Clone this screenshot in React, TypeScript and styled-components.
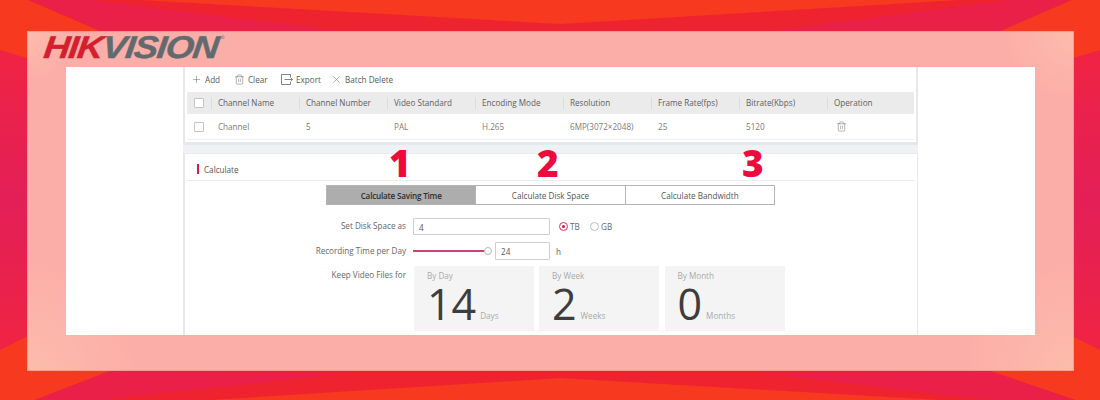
import React from "react";
import styled, { createGlobalStyle } from "styled-components";
import { Plus, Trash2, X } from "lucide-react";

const Global = createGlobalStyle`
  html, body { margin: 0; padding: 0; background: #f5371f; }
  * { box-sizing: border-box; }
`;
const Stage = styled.div`
  position: relative; width: 1100px; height: 400px; overflow: hidden;
  padding: 31px 26px 29px 27px; display: flex;
  font-family: "Open Sans", sans-serif; font-size: 8.15px; color: #555;
`;
const Backdrop = styled.svg`position: absolute; inset: 0; width: 1100px; height: 400px; filter: blur(0.5px);`;
const Frame = styled.div`
  position: relative; flex: 1; padding: 36px 39px; display: flex;
  box-shadow: inset 0 0 0 1px rgba(240, 120, 100, 0.4);
  background:
    radial-gradient(circle at 0 100%, #fdbcab 0, rgba(253, 188, 171, 0) 110px),
    radial-gradient(circle at 100% 100%, #fdbcab 0, rgba(253, 188, 171, 0) 110px),
    radial-gradient(circle at 100% 0, #fdbcab 0, rgba(253, 188, 171, 0) 70px),
    radial-gradient(circle at 0 0, #fdbcab 0, rgba(253, 188, 171, 0) 50px),
    #fbaea8;
`;
const Logo = styled.div`
  position: absolute; left: 17px; top: 0px; font: italic 700 31.5px/32px "Liberation Sans", sans-serif;
  letter-spacing: -1.1px; color: #626a6e; transform: scaleX(1.15) skewX(-6deg); transform-origin: left;
  -webkit-text-stroke: 0.4px currentColor; white-space: nowrap;
  sup { font-size: 5px; font-style: normal; vertical-align: 19px; line-height: 0; font-weight: 400; letter-spacing: 0; margin-left: 1px; -webkit-text-stroke: 0; }
`;
const LogoRed = styled.span`color: #d3202f;`;
const Page = styled.div`
  flex: 1; background: #fff; padding: 0 117px; display: flex; overflow: hidden;
`;
const Column = styled.div`
  flex: 1; display: flex; flex-direction: column; background: #eff2f4; gap: 8px; position: relative;
`;
const Card = styled.section`
  background: #fff; border: solid #e6e8ea; border-width: 0 2px 0 2px; padding: 0 2px;
`;
const TopCard = styled(Card)`height: 78px; border-bottom: 3px solid #e4e8eb; flex: none;`;
const BottomCard = styled(Card)`flex: 1; min-height: 0; border-top: 1px solid #e8eaec; border-right-width: 1px; padding-right: 3px;`;
const Toolbar = styled.div`height: 24px; margin-bottom: 1px; display: flex; align-items: center; padding-left: 4px;`;
const ToolItem = styled.span<{ $w: number }>`
  display: inline-flex; align-items: center; gap: 3px; width: ${p => p.$w}px; color: #5a5a5a; white-space: nowrap;
  svg { flex: none; }
`;
const Cols = styled.div`display: grid; grid-template-columns: 24px repeat(7, 88px) 87px;`;
const HeadRow = styled(Cols)`height: 22px; background: #ebebeb; align-items: center; color: #5e5e5e;`;
const BodyRow = styled(Cols)`height: 26px; background: #fff; align-items: center; color: #7b7b7b; border-bottom: 1px solid #f0f0f0;`;
const Cell = styled.div<{ $sep?: boolean }>`
  padding-left: 6px; white-space: nowrap; height: 12px; line-height: 12px;
  border-left: 1px solid ${p => (p.$sep ? "#dcdcdc" : "transparent")};
`;
const CheckCell = styled.div`padding-left: 7px; display: flex; align-items: center;`;
const Check = styled.span`
  width: 10px; height: 10px; border: 1px solid #c4c4c4; border-radius: 1px; background: #fff;
`;
const OpIcon = styled.div`padding-left: 9px; color: #666; display: flex; align-items: center;`;
const TitleBar = styled.div`
  height: 27px; border-bottom: 1px solid #ececec; display: flex; align-items: center; padding: 4px 0 0 10px; gap: 5px; color: #555;
`;
const RedMark = styled.i`width: 2px; height: 10px; background: #e2174a; display: block;`;
const Tabs = styled.div`display: flex; margin: 4px 0 0 139px; width: 449px; height: 20px; border: 1px solid #b5b5b5;`;
const Tab = styled.div<{ $active?: boolean }>`
  flex: 1; display: flex; align-items: center; justify-content: center;
  background: ${p => (p.$active ? "#adadad" : "#fff")};
  color: ${p => (p.$active ? "#2e2e2e" : "#555")};
  font-weight: ${p => (p.$active ? 600 : 400)};
  letter-spacing: ${p => (p.$active ? "-0.2px" : "0")};
  & + & { border-left: 1px solid #b5b5b5; }
`;
const Form = styled.div`
  display: grid; grid-template-columns: 219px 1fr; column-gap: 7px; margin-top: 12px; align-items: start;
`;
const Label = styled.div`
  text-align: right; color: #666; line-height: 18px; white-space: nowrap;
`;
const FieldRow = styled.div<{ $gap: number }>`display: flex; align-items: center; height: 18px; color: #666; margin-bottom: ${p => p.$gap}px;`;
const Input = styled.div<{ $w: number; $h: number }>`
  width: ${p => p.$w}px; height: ${p => p.$h}px; border: 1px solid #cfcfcf; border-radius: 1px;
  padding-left: 5px; line-height: 17px; color: #555; background: #fff; flex: none;
`;
const Radio = styled.span<{ $on?: boolean }>`
  width: 9px; height: 9px; border-radius: 50%; border: 1px solid ${p => (p.$on ? "#d4345f" : "#bbb")};
  display: inline-flex; align-items: center; justify-content: center; margin-right: 2px;
  &::after { content: ""; width: 3px; height: 3px; border-radius: 50%; background: ${p => (p.$on ? "#d9154a" : "transparent")}; }
`;
const FirstRadio = styled(Radio)`margin-left: 9px;`;
const RadioText = styled.span<{ $w: number }>`width: ${p => p.$w}px; color: #666;`;
const Unit = styled.span`margin-left: 6px; color: #666;`;
const Track = styled.div`width: 71px; height: 1.5px; background: #c9456f;`;
const Knob = styled.span`
  width: 8px; height: 8px; border: 1px solid #b8b8b8; border-radius: 50%; background: #fff; margin-right: 3px;
`;
const Stats = styled.div`display: flex; gap: 5.5px; margin-left: 1px;`;
const Stat = styled.div<{ $w: number }>`
  width: ${p => p.$w}px; height: 65px; background: #f4f4f5; padding: 4px 0 0 13px; color: #a9a9a9; flex: none;
`;
const StatLabel = styled.div`line-height: 11px;`;
const StatValue = styled.div`display: flex; align-items: flex-end; gap: 4px; height: 34px; margin-top: 6px;`;
const StatNum = styled.span`font-size: 43px; line-height: 33px; color: #3d3d3d; font-weight: 400; margin-bottom: 1px;`;
const StatUnit = styled.span`line-height: 11px;`;
const Callout = styled.div<{ $x: number }>`
  position: absolute; left: ${p => p.$x}px; top: 77px; font: 800 37px/37px "Open Sans", sans-serif; color: #ef0a3d;
`;

const Trash = () => <Trash2 size={11} strokeWidth={1} />;
const ExportIcon = () => (
  <svg width="12" height="11" viewBox="0 0 12 11" fill="none" stroke="#777" strokeWidth="0.9">
    <path d="M9.5 3V.5H.5v10h9V8M3.5 5.5h8M9.5 3.5l2 2-2 2" />
  </svg>
);

const heads = ["Channel Name", "Channel Number", "Video Standard", "Encoding Mode", "Resolution", "Frame Rate(fps)", "Bitrate(Kbps)", "Operation"];
const vals = ["Channel", "5", "PAL", "H.265", "6MP(3072×2048)", "25", "5120"];

export default function App() {
  return (
    <Stage>
      <Global />
      <Backdrop viewBox="0 0 1100 400" preserveAspectRatio="none">
        <defs>
          <linearGradient id="side" x1="0" x2="0" y1="0" y2="1">
            <stop offset="0" stopColor="#ef2343" />
            <stop offset="0.5" stopColor="#e31f57" />
            <stop offset="1" stopColor="#ef2343" />
          </linearGradient>
        </defs>
        <rect width="1100" height="400" fill="#f6391f" />
        <path d="M0 50 L40 62 L40 330 L0 350 Z" fill="url(#side)" />
        <path d="M1060 62 L1100 50 L1100 350 L1060 330 Z" fill="url(#side)" />
        <path d="M28 0 L1072 0 L1000 31 L100 31 Z" fill="#ef2230" />
        <path d="M140 0 L960 0 L560 24 Z" fill="#f6391f" />
        <path d="M30 0 L90 0 L340 31 L102 31 Z" fill="#ea2049" />
        <path d="M1070 0 L1010 0 L770 31 L1000 31 Z" fill="#ea2049" />
        <path d="M110 371 L990 371 L1075 400 L35 400 Z" fill="#ef2230" />
        <path d="M210 400 L560 378 L940 400 Z" fill="#f6391f" />
        <path d="M110 371 L350 373 L100 400 L35 400 Z" fill="#ea2049" />
        <path d="M990 371 L760 373 L990 400 L1075 400 Z" fill="#ea2049" />
      </Backdrop>
      <Frame>
        <Logo><LogoRed>HIK</LogoRed>VISION<sup>®</sup></Logo>
        <Page>
          <Column>
            <TopCard>
              <Toolbar>
                <ToolItem $w={43}><Plus size={11} strokeWidth={1} />Add</ToolItem>
                <ToolItem $w={47}><Trash />Clear</ToolItem>
                <ToolItem $w={50}><ExportIcon />Export</ToolItem>
                <ToolItem $w={62}><X size={11} strokeWidth={1} />Batch Delete</ToolItem>
              </Toolbar>
              <HeadRow>
                <CheckCell><Check /></CheckCell>
                {heads.map(h => <Cell key={h} $sep>{h}</Cell>)}
              </HeadRow>
              <BodyRow>
                <CheckCell><Check /></CheckCell>
                {vals.map(v => <Cell key={v}>{v}</Cell>)}
                <OpIcon><Trash /></OpIcon>
              </BodyRow>
            </TopCard>
            <BottomCard>
              <TitleBar><RedMark />Calculate</TitleBar>
              <Tabs>
                <Tab $active>Calculate Saving Time</Tab>
                <Tab>Calculate Disk Space</Tab>
                <Tab>Calculate Bandwidth</Tab>
              </Tabs>
              <Form>
                <Label>Set Disk Space as</Label>
                <FieldRow $gap={7}>
                  <Input $w={137} $h={17}>4</Input>
                  <FirstRadio $on />
                  <RadioText $w={20}>TB</RadioText>
                  <Radio />
                  <RadioText $w={12}>GB</RadioText>
                </FieldRow>
                <Label>Recording Time per Day</Label>
                <FieldRow $gap={6}>
                  <Track />
                  <Knob />
                  <Input $w={55} $h={18}>24</Input>
                  <Unit>h</Unit>
                </FieldRow>
                <Label>Keep Video Files for</Label>
                <Stats>
                  <Stat $w={119.5}><StatLabel>By Day</StatLabel><StatValue><StatNum>14</StatNum><StatUnit>Days</StatUnit></StatValue></Stat>
                  <Stat $w={120}><StatLabel>By Week</StatLabel><StatValue><StatNum>2</StatNum><StatUnit>Weeks</StatUnit></StatValue></Stat>
                  <Stat $w={120.5}><StatLabel>By Month</StatLabel><StatValue><StatNum>0</StatNum><StatUnit>Months</StatUnit></StatValue></Stat>
                </Stats>
              </Form>
            </BottomCard>
            <Callout $x={206}>1</Callout>
            <Callout $x={354}>2</Callout>
            <Callout $x={559}>3</Callout>
          </Column>
        </Page>
      </Frame>
    </Stage>
  );
}
